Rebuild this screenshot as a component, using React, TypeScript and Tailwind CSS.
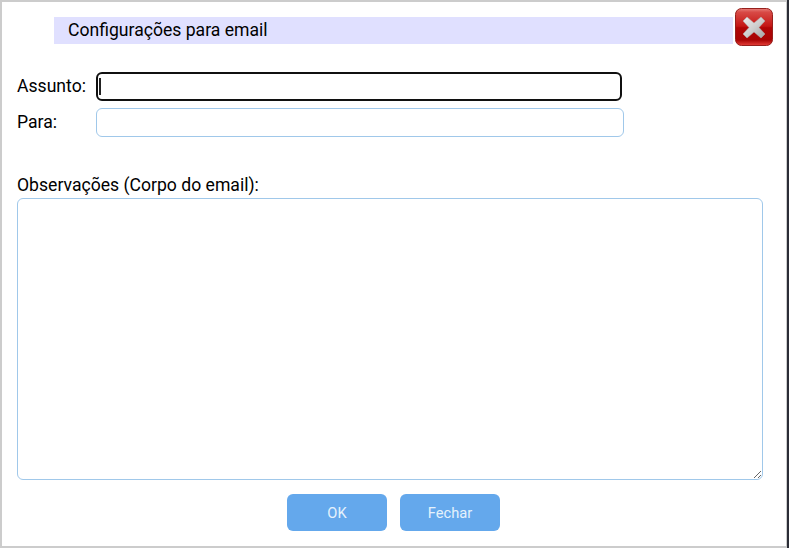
import React from "react";

const font = { fontFamily: "Roboto, sans-serif" };

function CloseIcon() {
  return (
    <svg width="38" height="38" viewBox="0 0 38 38">
      <defs>
        <linearGradient id="red" x1="0" y1="0" x2="0" y2="1">
          <stop offset="0" stopColor="#e8807c" />
          <stop offset="0.1" stopColor="#d84a46" />
          <stop offset="0.48" stopColor="#c41614" />
          <stop offset="0.52" stopColor="#b00606" />
          <stop offset="0.85" stopColor="#a80404" />
          <stop offset="1" stopColor="#e6403a" />
        </linearGradient>
        <linearGradient id="cross" x1="0" y1="0" x2="1" y2="1">
          <stop offset="0" stopColor="#ececec" />
          <stop offset="0.5" stopColor="#cfcfcf" />
          <stop offset="1" stopColor="#a4a4a4" />
        </linearGradient>
      </defs>
      <rect x="0.5" y="0.5" width="37" height="37" rx="6" fill="url(#red)" stroke="#96201c" />
      <path
        d="M12 9 L19 15 L26 9 L30 13 L24 19.5 L30 26 L26 30 L19 24 L12 30 L8 26 L14 19.5 L8 13 Z"
        fill="url(#cross)"
        stroke="#b0b0b0"
        strokeWidth="0.5"
        strokeLinejoin="round"
      />
    </svg>
  );
}

export default function App() {
  return (
    <div className="w-[789px] h-[548px] bg-[#2b2d36] overflow-hidden">
      <div
        className="w-[787px] h-[548px] bg-white border-t-2 border-l-2 border-b-2 border-r border-[#cccccc] text-black"
        style={font}
      >
        {/* Header */}
        <div className="flex items-end pl-[52px] pt-[6px] pr-[13px]">
          <div className="flex-1 h-[27px] mb-[2px] bg-[#e0e0ff] pl-[14px] text-[17.6px] leading-[27px]">
            Configurações para email
          </div>
          <button className="ml-[2px] w-[38px] h-[38px] block">
            <CloseIcon />
          </button>
        </div>

        {/* Fields */}
        <div className="flex items-center pl-[15px] mt-[26px] h-[29px]">
          <label className="w-[79px] text-[17.6px] -mt-[1px]">Assunto:</label>
          <div className="relative">
            <input className="block w-[526px] h-[29px] px-[2px] bg-white border-2 border-[#101010] rounded-[6px] outline-none" />
            <span className="absolute left-[3px] top-[6px] w-[2px] h-[17px] bg-[#222222]" />
          </div>
        </div>
        <div className="flex items-center pl-[15px] mt-[7px] h-[29px]">
          <label className="w-[79px] text-[17.6px] -mt-[1px]">Para:</label>
          <input className="w-[528px] h-[29px] bg-white border border-[#a0c8ea] rounded-[6px] outline-none" />
        </div>

        <label className="block ml-[15px] mt-[37px] text-[17.6px] leading-[23px]">Observações (Corpo do email):</label>
        <textarea className="block ml-[15px] mt-[1px] w-[746px] h-[282px] bg-white border border-[#a0c8ea] rounded-[6px] outline-none resize" />

        {/* Buttons */}
        <div className="flex ml-[285px] mt-[14px] gap-[13px]">
          <button className="w-[100px] h-[37px] rounded-[6px] bg-[#64a8ec] text-[#e4f2fc] text-[14.67px]">OK</button>
          <button className="w-[100px] h-[37px] rounded-[6px] bg-[#64a8ec] text-[#e4f2fc] text-[14.67px]">Fechar</button>
        </div>
      </div>
    </div>
  );
}
